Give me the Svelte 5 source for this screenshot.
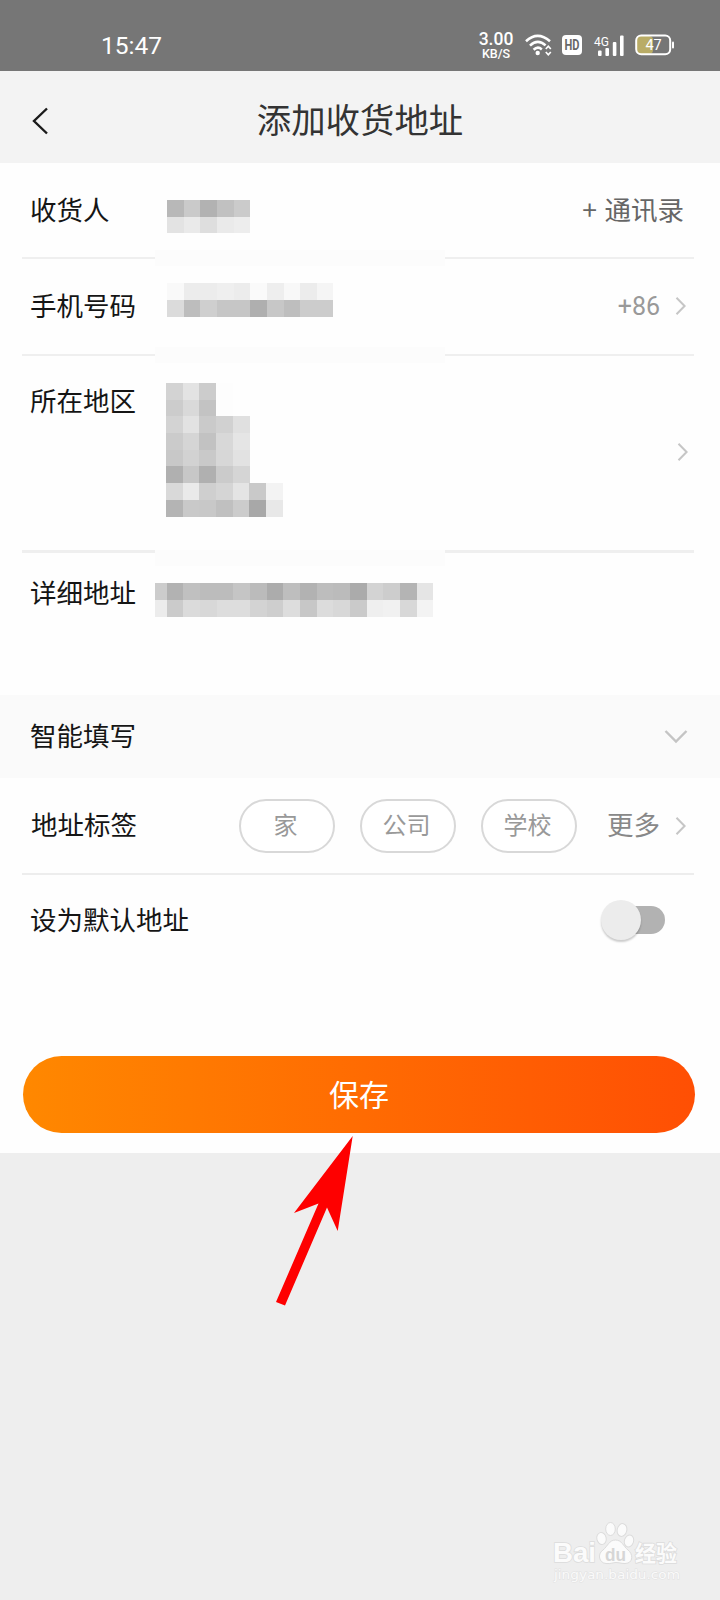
<script lang="ts">
	// Side of one mosaic cell
	const CELL = 50 / 3;

	type Cells = number[][];

	// Grey level per cell, row by row
	const nameCells: Cells = [
		[184, 202, 178, 193, 203],
		[227, 234, 222, 234, 237]
	];
	const phoneCells: Cells = [
		[249, 236, 236, 239, 236, 250, 238, 248, 236, 245],
		[219, 189, 207, 198, 198, 175, 199, 190, 204, 204]
	];
	const regionCells: Cells = [
		[211, 227, 204, 253],
		[204, 217, 195, 253],
		[211, 226, 202, 209, 224],
		[203, 213, 194, 216, 229],
		[200, 210, 201, 215, 226],
		[176, 199, 176, 203, 213],
		[217, 234, 207, 213, 228, 201, 243],
		[180, 201, 200, 192, 204, 168, 232]
	];
	// the first column is cut off at the edge of the input
	const detailCells: Cells = [
		[204, 178, 192, 188, 188, 197, 187, 172, 190, 178, 189, 187, 171, 211, 205, 180, 229],
		[236, 203, 219, 216, 221, 221, 211, 206, 221, 199, 220, 216, 202, 239, 241, 216, 243]
	];

	const tags = ['家', '公司', '学校'];
	let selected = $state('');
	let isDefault = $state(false);
</script>

{#snippet mosaic(cells: Cells, cut: number)}
	{@const cols = Math.max(...cells.map((r) => r.length))}
	<svg
		class="mosaic"
		width={cols * CELL - cut}
		height={cells.length * CELL}
		viewBox="{cut} 0 {cols * CELL - cut} {cells.length * CELL}"
		shape-rendering="crispEdges"
	>
		{#each cells as row, y}
			{#each row as v, x}
				<rect x={x * CELL} y={y * CELL} width={CELL + 0.2} height={CELL + 0.2} fill="rgb({v},{v},{v})" />
			{/each}
		{/each}
	</svg>
{/snippet}

{#snippet chevron()}
	<svg class="chevron" width="12" height="20" viewBox="0 0 12 20">
		<path d="M1.5 1.8 L9.6 10 L1.5 18.2" fill="none" stroke="#c6c6c6" stroke-width="2" />
	</svg>
{/snippet}

<div class="page">
	<!-- Status bar -->
	<div class="status">
		<span class="time">15:47</span>
		<div class="status-icons">
			<div class="speed">
				<span class="speed-value">3.00</span>
				<span class="speed-unit">KB/S</span>
			</div>
			<svg class="wifi" width="27" height="22" viewBox="0 0 27 22">
				<g fill="none" stroke="#fff" stroke-width="2.6">
					<path d="M1 7.2 Q12.5 -3.6 25 7.2" />
					<path d="M5 11.6 Q12.7 4.4 20.6 11.4" />
					<path d="M8.6 15.8 Q12.7 11.8 16.8 15.4" />
				</g>
				<circle cx="12.7" cy="19" r="2.2" fill="#fff" />
				<path d="M20.8 15 L23.3 12.2 L25.8 15 M20.8 18 L23.3 20.8 L25.8 18" fill="none" stroke="#fff" stroke-width="1.7" />
			</svg>
			<svg class="hd" width="20" height="20" viewBox="0 0 20 20">
				<rect width="20" height="20" rx="4" fill="#fff" />
				<text x="2.5" y="15" font-size="14" font-weight="700" textLength="15" lengthAdjust="spacingAndGlyphs" fill="#686868">HD</text>
			</svg>
			<svg class="signal" width="31" height="23" viewBox="0 0 31 23">
				<text x="0" y="12" font-size="13.5" textLength="15" lengthAdjust="spacingAndGlyphs" fill="#fff">4G</text>
				<g fill="#fff">
					<rect x="4" y="16.5" width="3.6" height="5.5" rx="1" />
					<rect x="11.4" y="14" width="3.6" height="8" rx="1" />
					<rect x="18.8" y="8" width="3.6" height="14" rx="1" />
					<rect x="26" y="1.5" width="3.6" height="20.5" rx="1" />
				</g>
			</svg>
			<svg class="battery" width="40" height="22" viewBox="0 0 40 22">
				<rect x="2" y="2" width="16" height="18" rx="4" fill="#b9ac66" />
				<rect x="1.2" y="1.4" width="34" height="18.8" rx="5" fill="none" stroke="#fff" stroke-width="2" />
				<rect x="37" y="7.5" width="2" height="7" rx="1" fill="#fff" />
				<text x="18.6" y="15.9" font-size="14.5" text-anchor="middle" fill="#fff">47</text>
			</svg>
		</div>
	</div>

	<!-- Header -->
	<header class="header">
		<svg class="back" width="18" height="28" viewBox="0 0 18 28">
			<path d="M15 1.5 L2 14 L15 26.5" fill="none" stroke="#1a1a1a" stroke-width="2.4" />
		</svg>
		<h1 class="title">添加收货地址</h1>
	</header>

	<main class="form">
		<section class="row name">
			<span class="label">收货人</span>
			<div class="value">{@render mosaic(nameCells, 0)}</div>
			<span class="contacts">+ 通讯录</span>
		</section>
		<div class="divider"><i></i><b></b><i></i></div>

		<section class="row phone">
			<span class="label">手机号码</span>
			<div class="value">{@render mosaic(phoneCells, 0)}</div>
			<span class="code">+86</span>
			{@render chevron()}
		</section>
		<div class="divider"><i></i><b></b><i></i></div>

		<section class="row region">
			<span class="label">所在地区</span>
			<div class="value">{@render mosaic(regionCells, 0)}</div>
			{@render chevron()}
		</section>
		<div class="divider thick"><i></i><b></b><i></i></div>

		<section class="row detail">
			<span class="label">详细地址</span>
			<div class="value">{@render mosaic(detailCells, 5)}</div>
		</section>

		<section class="row smart">
			<span class="label">智能填写</span>
			<svg width="24" height="14" viewBox="0 0 24 14">
				<path d="M1.5 1 L12 11.5 L22.5 1" fill="none" stroke="#c4c4c4" stroke-width="2.4" />
			</svg>
		</section>

		<section class="row tags">
			<span class="label">地址标签</span>
			<div class="tag-list">
				{#each tags as tag}
					<button class="tag" class:on={selected === tag} onclick={() => (selected = tag)}>{tag}</button>
				{/each}
			</div>
			<span class="more">更多</span>
			{@render chevron()}
		</section>
		<div class="line"></div>

		<section class="row default">
			<span class="label">设为默认地址</span>
			<button class="switch" class:on={isDefault} aria-label="设为默认地址" onclick={() => (isDefault = !isDefault)}>
				<span class="knob"></span>
			</button>
		</section>

		<button class="save">保存</button>
	</main>

	<!-- Pointer to the save button -->
	<svg class="arrow" width="80" height="172" viewBox="0 0 80 172">
		<path d="M76.7 0 L61.7 95 L51 71.5 L9 169.5 L0 166 L42.5 67.5 L18 77 Z" fill="#fe0000" />
	</svg>

	<!-- Watermark -->
	<svg class="watermark" width="136" height="68" viewBox="0 0 136 68">
		<g fill="#fbfbfb" stroke="#dcdcdc" stroke-width="1">
			<text class="wm-bold" x="1" y="40.5" font-size="28" textLength="43" lengthAdjust="spacingAndGlyphs" stroke-width="1.6">Bai</text>
			<ellipse cx="49.5" cy="17.5" rx="4.7" ry="6" transform="rotate(-12 49.5 17.5)" />
			<ellipse cx="58.5" cy="8" rx="4.8" ry="6.5" />
			<ellipse cx="70" cy="9" rx="4.8" ry="6.5" transform="rotate(12 70 9)" />
			<ellipse cx="77" cy="20" rx="4.6" ry="6" transform="rotate(18 77 20)" />
			<path d="M63.5 19 C57 19 56 25 51 29 C45 33 47 42 54 42.5 C59 43 61 41.5 64 41.5 C68 41.5 72 43.5 76 42 C81 40 81 33 76 29 C71 25 70 19 63.5 19z" />
			<text class="wm-bold" x="83" y="39.5" font-size="22" textLength="42" lengthAdjust="spacingAndGlyphs" stroke-width="1.6">经验</text>
		</g>
		<text class="wm-du" x="53" y="39.5" font-size="19" textLength="21" lengthAdjust="spacingAndGlyphs" fill="#d6d6d6">du</text>
		<text class="wm-url" x="2" y="58" font-size="13" textLength="126" lengthAdjust="spacingAndGlyphs" fill="#fafafa" stroke="#e2e2e2" stroke-width="1">jingyan.baidu.com</text>
	</svg>
</div>

<style>
	:global(body) {
		margin: 0;
		background: #eee;
	}

	.page {
		position: relative;
		width: 720px;
		height: 1600px;
		overflow: hidden;
		background: #eee;
		font-family: 'Noto Sans CJK SC', sans-serif;
		color: #151515;
	}
	svg { display: block; flex: none; }
	button {
		font-family: inherit;
		padding: 0;
		border: 0;
	}

	/* Status bar */
	.status {
		display: flex;
		align-items: flex-start;
		justify-content: space-between;
		box-sizing: border-box;
		height: 71px;
		padding: 0 45px 0 101px;
		background: #767676;
		color: #fff;
		font-family: Roboto, sans-serif;
	}
	.status svg { overflow: visible; }
	.time {
		font-size: 24.5px;
		line-height: 30px;
		padding-top: 31px;
	}
	.status-icons {
		display: flex;
		align-items: flex-start;
		padding-top: 34px;
	}
	.speed {
		display: flex;
		flex-direction: column;
		align-items: center;
		width: 36px;
		margin: -2px 11px 0 0;
		font-weight: 500;
	}
	.speed-value {
		font-size: 17.5px;
		line-height: 15px;
	}
	.speed-unit {
		font-size: 12.5px;
		line-height: 13px;
	}
	.wifi { margin-right: 10px; }
	.hd { margin: 1px 12px 0 0; }
	.signal { margin-right: 10px; }

	/* Header */
	.header {
		display: grid;
		grid-template-columns: 64px 1fr 64px;
		align-items: center;
		height: 92px;
		background: #f3f3f3;
	}
	.back { margin: 8px 0 0 32px; }
	.title {
		margin: 2px 0 0;
		font-size: 34.4px;
		font-weight: 400;
		line-height: 50px;
		text-align: center;
		color: #333;
	}

	/* Form */
	.form {
		height: 990px;
		background: #fefefe;
	}
	.row {
		display: flex;
		align-items: center;
		box-sizing: border-box;
		padding: 0 30px;
		font-size: 26.5px;
		line-height: 38px;
	}
	.label {
		flex: none;
		padding-bottom: 3px;
	}
	.value {
		flex: 1;
		min-width: 0;
		align-self: flex-start;
	}
	.name { height: 94px; }
	.name .value { margin: 37px 0 0 57px; }
	.name .contacts {
		color: #666;
		padding: 0 6px 3px 0;
		word-spacing: 1.5px;
	}
	.phone { height: 95px; }
	.phone .value { margin: 24.3px 0 0 30.5px; }
	.phone .chevron { margin-top: -2px; }
	.code {
		color: #999;
		font-family: Roboto, 'Noto Sans CJK SC', sans-serif;
		font-size: 25px;
	}
	.chevron { margin: 0 3px 0 15px; }
	.region {
		height: 194px;
		align-items: flex-start;
	}
	.region .label { padding-top: 25px; }
	.region .value { margin: 27.4px 0 0 30.2px; }
	.region .chevron { margin: 86px 1px 0 0; }
	.detail {
		height: 142px;
		align-items: flex-start;
	}
	.detail .label { padding-top: 20px; }
	.detail .value { margin: 30.3px 0 0 19px; }

	/* Divider with a faded patch in its middle */
	.divider {
		position: relative;
		display: flex;
		justify-content: space-between;
		height: 2px;
		padding: 0 26px 0 22px;
	}
	.divider i {
		width: 133px;
		background: #efefef;
	}
	.divider i:last-child { width: 249px; }
	.divider b {
		position: absolute;
		left: 155px;
		top: -7px;
		width: 290px;
		height: 16px;
		background: #fcfcfc;
	}
	.divider.thick { height: 3px; }
	.divider.thick b { top: 0; }
	.line {
		height: 2px;
		margin: 0 26px 0 22px;
		background: #ededed;
	}

	.smart {
		justify-content: space-between;
		height: 83px;
		background: #fafafa;
		padding-right: 32px;
	}
	.tags { height: 95px; }
	.tags .label { padding-left: 1px; }
	.tag-list {
		display: flex;
		gap: 25px;
		margin: 0 30px 0 auto;
	}
	.tag {
		box-sizing: border-box;
		width: 96px;
		height: 54px;
		border: 2px solid #d8d8d8;
		border-radius: 27px;
		background: #fff;
		color: #999;
		font-size: 24px;
		line-height: 46px;
		padding: 0 3px 4px 0;
	}
	.tag.on {
		border-color: #ff6a00;
		color: #ff6a00;
	}
	.more {
		color: #888;
		padding-bottom: 3px;
	}

	.default {
		justify-content: space-between;
		height: 91px;
		padding-right: 55px;
	}
	.default .label { padding-bottom: 4px; }
	.switch {
		display: flex;
		align-items: center;
		width: 56px;
		height: 28px;
		margin-top: -2px;
		border-radius: 14px;
		background: #b2b2b2;
	}
	.switch.on {
		justify-content: flex-end;
		background: #ff9a4d;
	}
	.knob {
		flex: none;
		width: 40px;
		height: 40px;
		margin-left: -8px;
		border-radius: 50%;
		background: #ececec;
		box-shadow: 0 2px 2px rgba(0, 0, 0, 0.2);
	}
	.save {
		display: block;
		width: 672px;
		height: 77px;
		margin: 90px 0 0 23px;
		padding-bottom: 4px;
		border-radius: 39px;
		background: linear-gradient(90deg, #ff8800, #ff4f04);
		color: #fff;
		font-size: 30px;
		line-height: 72px;
	}

	/* Things lying over the page */
	.arrow {
		position: absolute;
		left: 276px;
		top: 1136px;
	}
	.watermark {
		position: absolute;
		left: 552px;
		top: 1521px;
	}
	.wm-bold {
		font-family: 'Liberation Sans', 'Noto Sans CJK SC', sans-serif;
		font-weight: 700;
		paint-order: stroke;
	}
	.wm-du {
		font-family: 'Liberation Sans', sans-serif;
		font-weight: 700;
	}
	.wm-url {
		font-family: 'DejaVu Sans', sans-serif;
		paint-order: stroke;
	}
</style>
